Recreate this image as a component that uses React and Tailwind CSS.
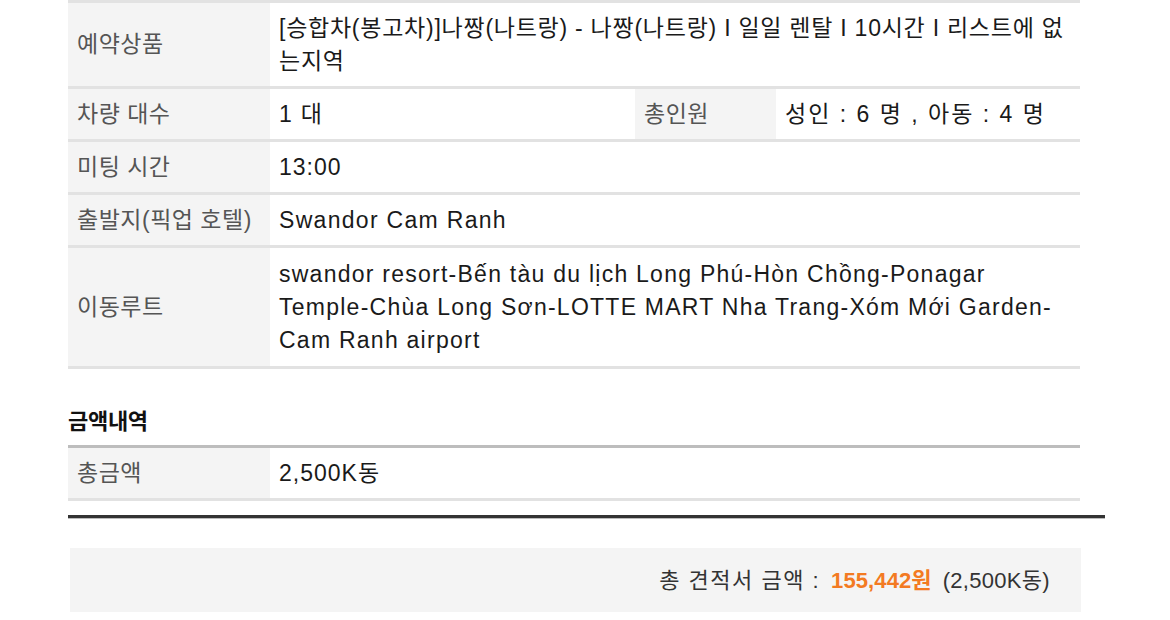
const font = { fontFamily: '"Liberation Sans", "Noto Sans CJK KR", sans-serif' }

const Label = ({ children, className = '' }) => (
	<div className={`bg-[#f4f4f4] text-[#555] pl-[9px] pr-[6px] flex items-center tracking-[0.5px] ${className}`}>
		{children}
	</div>
)

const Value = ({ children, className = '' }) => (
	<div className={`bg-white text-[#1a1a1a] pl-[9px] pr-[2px] flex items-center ${className}`}>
		{children}
	</div>
)

const Row = ({ children }) => (
	<div className="flex border-b-[3px] border-[#e2e2e2]">{children}</div>
)

const App = () => {
	return (
		<div className="min-h-screen bg-white pl-[68px] text-[23px] leading-[33px]" style={font}>
			{/* Booking details */}
			<div className="w-[1012px] border-t-[3px] border-[#e2e2e2]">
				<Row>
					<Label className="w-[202px] shrink-0">예약상품</Label>
					<Value className="flex-1 pt-[9px] pb-[8px] tracking-[0.75px]">
						[승합차(봉고차)]나짱(나트랑) - 나짱(나트랑) I 일일 렌탈 I 10시간 I 리스트에 없는지역
					</Value>
				</Row>
				<Row>
					<Label className="w-[202px] shrink-0">차량 대수</Label>
					<Value className="w-[365px] shrink-0 pt-[9px] pb-[8px] tracking-[1.3px]">1 대</Value>
					<Label className="w-[141px] shrink-0 pl-[8px]">총인원</Label>
					<Value className="flex-1 pt-[9px] pb-[8px] tracking-[2px]">성인 : 6 명 , 아동 : 4 명</Value>
				</Row>
				<Row>
					<Label className="w-[202px] shrink-0">미팅 시간</Label>
					<Value className="flex-1 pt-[9px] pb-[8px] tracking-[1px]">13:00</Value>
				</Row>
				<Row>
					<Label className="w-[202px] shrink-0">출발지(픽업 호텔)</Label>
					<Value className="flex-1 pt-[9px] pb-[8px] tracking-[1.3px]">Swandor Cam Ranh</Value>
				</Row>
				<Row>
					<Label className="w-[202px] shrink-0">이동루트</Label>
					<Value className="flex-1 pt-[10px] pb-[9px] tracking-[1.25px]">
						swandor resort-Bến tàu du lịch Long Phú-Hòn Chồng-Ponagar Temple-Chùa Long Sơn-LOTTE MART Nha Trang-Xóm Mới Garden-Cam Ranh airport
					</Value>
				</Row>
			</div>

			{/* Amount */}
			<h2 className="mt-[39px] mb-[9px] text-[22px] leading-[28px] font-bold text-[#111] tracking-[-0.3px]">금액내역</h2>
			<div className="w-[1012px] border-t-[3px] border-[#bdbdbd]">
				<Row>
					<Label className="w-[202px] shrink-0">총금액</Label>
					<Value className="flex-1 pt-[9px] pb-[8px] tracking-[1px]">2,500K동</Value>
				</Row>
			</div>

			<div className="mt-[14px] w-[1037px] h-[4px] bg-[#333] border-b border-[#bbb]"></div>

			<div className="mt-[29px] ml-[2px] w-[1011px] h-[64px] bg-[#f4f4f4] flex items-center justify-end pr-[31px] text-[22px] text-[#333]">
				<span className="tracking-[1.5px]">총 견적서 금액 :</span>
				<span className="ml-[11px] font-bold text-[#f37a22] tracking-[0.1px]">155,442원</span>
				<span className="ml-[11px] tracking-[0.3px]">(2,500K동)</span>
			</div>
		</div>
	)
}

export default App
